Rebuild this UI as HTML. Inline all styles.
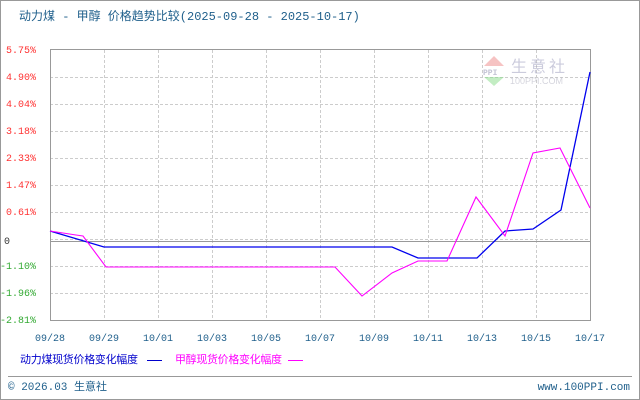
<!DOCTYPE html>
<html><head><meta charset="utf-8"><style>
html,body{margin:0;padding:0;background:#fff;}
body{width:640px;height:400px;overflow:hidden;position:relative;}
</style></head><body>
<svg width="640" height="400" style="position:absolute;left:0;top:0" font-family="Liberation Mono, Noto Sans CJK SC, monospace">
<rect x="0.5" y="0.5" width="639" height="399" fill="#fff" stroke="#999"/>
<text x="19" y="20" font-size="12" fill="#1f5f8b">动力煤 - 甲醇 价格趋势比较(2025-09-28 - 2025-10-17)</text>
<g stroke="#ccc" stroke-dasharray="3,2" fill="none">
<path d="M50 77.5H590M50 104.5H590M50 131.5H590M50 158.5H590M50 185.5H590M50 212.5H590M50 239.5H590M50 266.5H590M50 293.5H590"/>
<path d="M104.5 50V320M158.5 50V320M212.5 50V320M266.5 50V320M320.5 50V320M374.5 50V320M428.5 50V320M482.5 50V320M536.5 50V320"/>
</g>
<rect x="50.5" y="49.5" width="540" height="271" fill="none" stroke="#999"/>
<line x1="50" y1="241.5" x2="590" y2="241.5" stroke="#999"/>
<g opacity="0.5">
<polygon points="494,56 484,66 504,66" fill="#e88"/>
<polygon points="484,77 504,77 494,86" fill="#8d8"/>
<text x="483" y="75" font-size="8" fill="#88a" font-weight="bold">PPI</text>
<text x="511" y="72" font-size="16" fill="#99b" font-family="Liberation Sans, Noto Sans CJK SC, sans-serif" letter-spacing="3">生意社</text>
<text x="510" y="84" font-size="9" fill="#aab" font-family="Liberation Sans, sans-serif">100PPI.COM</text>
</g>
<polyline fill="none" stroke="#0000ee" stroke-width="1.3" points="50,231 104,247 392,247 418,258 477,258 505,231 533,229 561,210 590,72"/>
<polyline fill="none" stroke="#ff00ff" stroke-width="1.1" points="50,231 76,235 83,236 106,267 335,267 362,296 392,273 418,261 447,261 476,197 505,236 533,153 560,148 590,208"/>
<g font-size="10" text-anchor="end">
<text x="36" y="53" fill="#f33">5.75%</text>
<text x="36" y="80" fill="#f33">4.90%</text>
<text x="36" y="107" fill="#f33">4.04%</text>
<text x="36" y="134" fill="#f33">3.18%</text>
<text x="36" y="161" fill="#f33">2.33%</text>
<text x="36" y="188" fill="#f33">1.47%</text>
<text x="36" y="215" fill="#f33">0.61%</text>
<text x="10" y="244" fill="#333">0</text>
<text x="36" y="269" fill="#3a3">-1.10%</text>
<text x="36" y="296" fill="#3a3">-1.96%</text>
<text x="36" y="323" fill="#3a3">-2.81%</text>
</g>
<g font-size="10" fill="#1f5f8b" text-anchor="middle">
<text x="50" y="341">09/28</text><text x="104" y="341">09/29</text><text x="158" y="341">10/01</text><text x="212" y="341">10/03</text><text x="266" y="341">10/05</text><text x="320" y="341">10/07</text><text x="374" y="341">10/09</text><text x="428" y="341">10/11</text><text x="482" y="341">10/13</text><text x="536" y="341">10/15</text><text x="590" y="341">10/17</text>
</g>
<text x="20" y="363" font-size="11" fill="#00c" font-family="Liberation Sans, Noto Sans CJK SC, sans-serif" textLength="118">动力煤现货价格变化幅度</text>
<line x1="147" y1="360.5" x2="162" y2="360.5" stroke="#00c"/>
<text x="175" y="363" font-size="11" fill="#f0f" font-family="Liberation Sans, Noto Sans CJK SC, sans-serif" textLength="107">甲醇现货价格变化幅度</text>
<line x1="288" y1="360.5" x2="303" y2="360.5" stroke="#f0f"/>
<line x1="8" y1="376.5" x2="632" y2="376.5" stroke="#999"/>
<text x="8" y="390" font-size="11" fill="#1f5f8b">© 2026.03 <tspan font-family="Liberation Sans, Noto Sans CJK SC, sans-serif">生意社</tspan></text>
<text x="630" y="390" font-size="11" fill="#1f5f8b" text-anchor="end">www.100PPI.com</text>
</svg>
</body></html>
